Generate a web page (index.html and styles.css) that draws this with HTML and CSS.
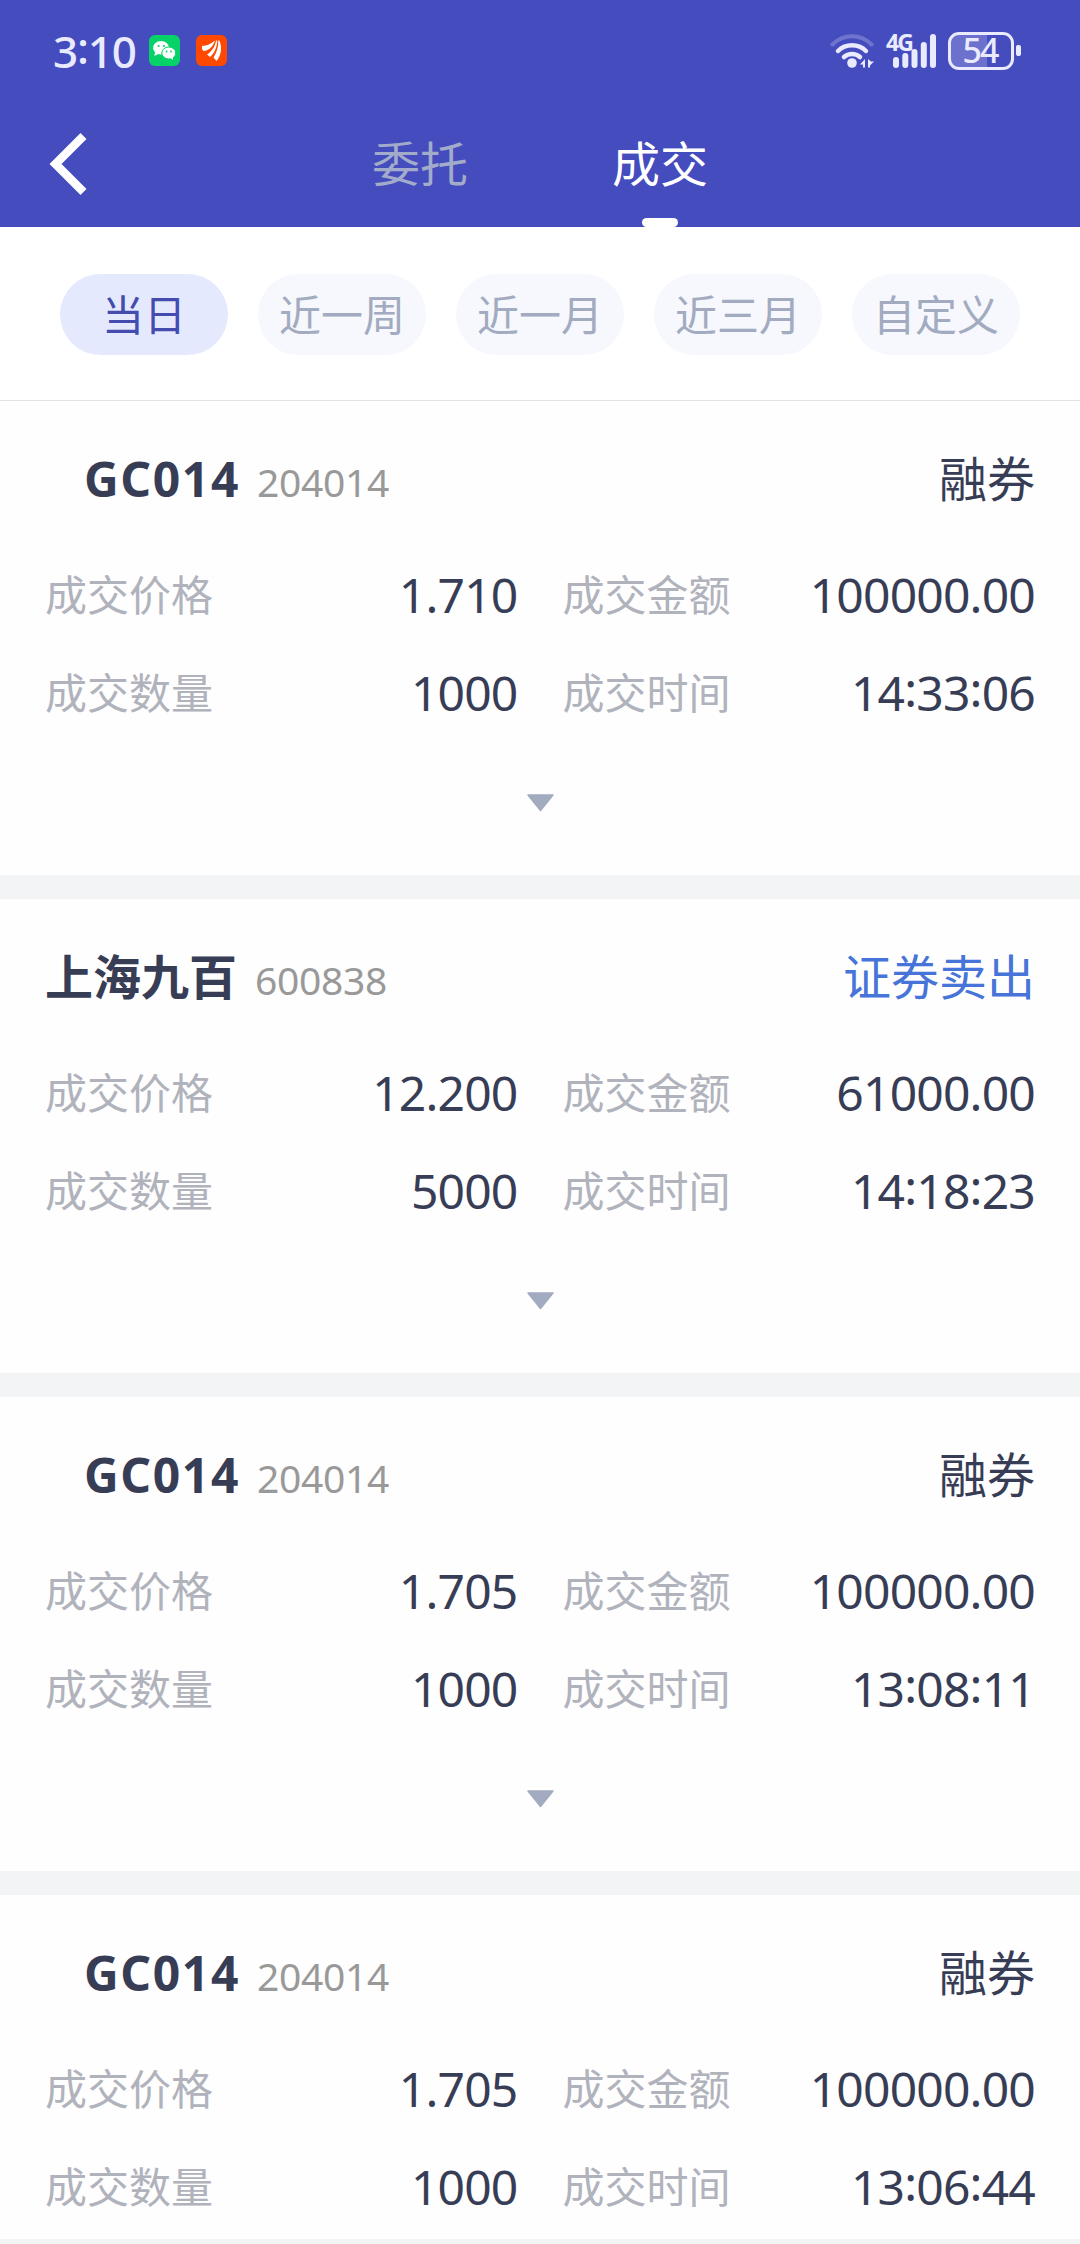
FILE: index.html
```html
<!DOCTYPE html>
<html lang="zh-CN">
<head>
    <meta charset="UTF-8">
    <meta name="viewport" content="width=device-width, initial-scale=1.0">
    <title>成交</title>
    <link rel="stylesheet" href="styles.css">
</head>
<body>
    <header class="header">
        <div class="status-bar">
            <span class="time">3<i>:</i>10</span>
            <svg class="app-icon" viewBox="0 0 31 31">
                <rect width="31" height="31" rx="6" fill="#07d268"/>
                <ellipse cx="12" cy="12.800" rx="8" ry="6.800" fill="#fff"/>
                <path d="M6 17l-.6 4 4-2z" fill="#fff"/>
                <ellipse cx="19.800" cy="18" rx="7" ry="6" fill="#fff" stroke="#07d268" stroke-width="1"/>
                <path d="M21 23l3 1.800v-3z" fill="#fff"/>
                <circle cx="9.600" cy="11" r="1.100" fill="#07d268"/>
                <circle cx="14.800" cy="11" r="1.100" fill="#07d268"/>
                <circle cx="17.600" cy="16.500" r="0.900" fill="#07d268"/>
                <circle cx="22" cy="16.500" r="0.900" fill="#07d268"/>
            </svg>
            <svg class="app-icon" viewBox="0 0 31 31">
                <rect width="31" height="31" rx="6" fill="#ff4800"/>
                <g fill="#fff">
                    <path d="M6 11c5-.5 9-2 13-5.500-2 6-5.500 10-11.500 10.500C6 15 5.800 13 6 11z"/>
                    <path d="M20 5.500c-.8 6-4 10.500-9 14l3 2.500c4.500-4 7.200-10 7.200-16.500z"/>
                    <path d="M22.200 5.500c.3 7-1.700 12-4.700 17l3 3.500c5-6 5.800-14 2.800-20.500z"/>
                </g>
            </svg>
            <div class="status-right">
                <svg class="wifi" viewBox="0 0 44 34" fill="none" stroke="#eaeaff" stroke-linecap="round">
                    <path d="M2.500 10.500a27 27 0 0 1 39 0" stroke-width="4" opacity="0.250"/>
                    <path d="M8 17a20 20 0 0 1 28 0" stroke-width="4.500"/>
                    <path d="M14 23a12 12 0 0 1 16 0" stroke-width="4.500"/>
                    <circle cx="22" cy="29" r="4.800" fill="#eaeaff" stroke="none"/>
                    <path d="M35 25v8.500h-2v-3h-3zM38 25v8.500h2v-2l4-4h-3z" fill="#eaeaff" stroke="none"/>
                </svg>
                <div class="signal">
                    <span class="net">4G</span>
                    <svg viewBox="0 0 50 34" fill="#eaeaff">
                        <rect x="7" y="23" width="6" height="11" rx="3"/>
                        <rect x="16.300" y="19" width="6" height="15" rx="3"/>
                        <rect x="25.500" y="15" width="6" height="19" rx="3"/>
                        <rect x="34.800" y="8" width="6" height="26" rx="3"/>
                        <rect x="44" y="0" width="6" height="34" rx="3"/>
                    </svg>
                </div>
                <div class="battery">54</div>
                <div class="battery-tip"></div>
            </div>
        </div>
        <nav class="nav">
            <svg class="back" viewBox="0 0 38 62">
                <path d="M34.500 3L6.500 31l28 28" fill="none" stroke="#fff" stroke-width="8.500"/>
            </svg>
            <div class="tabs">
                <div class="tab">委托</div>
                <div class="tab active">成交</div>
            </div>
        </nav>
    </header>

    <div class="filters">
        <div class="chip selected">当日</div>
        <div class="chip">近一周</div>
        <div class="chip">近一月</div>
        <div class="chip">近三月</div>
        <div class="chip">自定义</div>
    </div>

    <main class="list">
        <section class="card">
            <div class="card-head">
                <span class="name indent">GC014</span>
                <span class="code">204014</span>
                <span class="side">融券</span>
            </div>
            <div class="grid">
                <div class="cell"><span class="label">成交价格</span><span class="value">1.710</span></div>
                <div class="cell"><span class="label">成交金额</span><span class="value">100000.00</span></div>
                <div class="cell"><span class="label">成交数量</span><span class="value">1000</span></div>
                <div class="cell"><span class="label">成交时间</span><span class="value">14<i>:</i>33<i>:</i>06</span></div>
            </div>
            <div class="expand"><svg viewBox="0 0 27 18"><path d="M1 1h25L13.500 16.500z"/></svg></div>
        </section>

        <section class="card">
            <div class="card-head">
                <span class="name">上海九百</span>
                <span class="code">600838</span>
                <span class="side sell">证券卖出</span>
            </div>
            <div class="grid">
                <div class="cell"><span class="label">成交价格</span><span class="value">12.200</span></div>
                <div class="cell"><span class="label">成交金额</span><span class="value">61000.00</span></div>
                <div class="cell"><span class="label">成交数量</span><span class="value">5000</span></div>
                <div class="cell"><span class="label">成交时间</span><span class="value">14<i>:</i>18<i>:</i>23</span></div>
            </div>
            <div class="expand"><svg viewBox="0 0 27 18"><path d="M1 1h25L13.500 16.500z"/></svg></div>
        </section>

        <section class="card">
            <div class="card-head">
                <span class="name indent">GC014</span>
                <span class="code">204014</span>
                <span class="side">融券</span>
            </div>
            <div class="grid">
                <div class="cell"><span class="label">成交价格</span><span class="value">1.705</span></div>
                <div class="cell"><span class="label">成交金额</span><span class="value">100000.00</span></div>
                <div class="cell"><span class="label">成交数量</span><span class="value">1000</span></div>
                <div class="cell"><span class="label">成交时间</span><span class="value">13<i>:</i>08<i>:</i>11</span></div>
            </div>
            <div class="expand"><svg viewBox="0 0 27 18"><path d="M1 1h25L13.500 16.500z"/></svg></div>
        </section>

        <section class="card">
            <div class="card-head">
                <span class="name indent">GC014</span>
                <span class="code">204014</span>
                <span class="side">融券</span>
            </div>
            <div class="grid">
                <div class="cell"><span class="label">成交价格</span><span class="value">1.705</span></div>
                <div class="cell"><span class="label">成交金额</span><span class="value">100000.00</span></div>
                <div class="cell"><span class="label">成交数量</span><span class="value">1000</span></div>
                <div class="cell"><span class="label">成交时间</span><span class="value">13<i>:</i>06<i>:</i>44</span></div>
            </div>
        </section>
    </main>
</body>
</html>
```

FILE: styles.css
```css
* {
    box-sizing: border-box;
}
body {
    margin: 0;
    height: 2244px;
    display: flex;
    flex-direction: column;
    overflow: hidden;
    background: #f3f4f6;
    color: #383d56;
    font-family: "Noto Sans", "Noto Sans CJK SC", sans-serif;
}
svg {
    display: block;
}
/* raised colon in times */
i {
    font-style: normal;
    vertical-align: 4px;
    line-height: 1;
}

/* header */
.header {
    height: 227px;
    flex: none;
    background: #444cbe;
}
.status-bar {
    height: 101px;
    padding: 0 59px 0 53px;
    display: flex;
    align-items: center;
    color: #eaeaff;
}
.time {
    width: 96px;
    font-size: 44px;
    font-weight: 500;
    line-height: 60px;
    letter-spacing: -1.2px;
}
.app-icon {
    width: 31px;
    height: 31px;
    margin-right: 16px;
}
.status-right {
    margin-left: auto;
    display: flex;
    align-items: center;
}
.wifi {
    width: 44px;
    height: 34px;
    margin-right: 12px;
}
.signal {
    position: relative;
    width: 50px;
    height: 34px;
    margin-right: 12px;
}
.net {
    position: absolute;
    left: 0;
    top: -3px;
    font-size: 23px;
    font-weight: 700;
    line-height: 23px;
    letter-spacing: -2px;
}
.battery {
    width: 66px;
    height: 38px;
    padding-right: 2px;
    border: 3px solid #eaeaff;
    border-radius: 11px;
    background: linear-gradient(to right, #6b71cc 60%, transparent 60%);
    font-size: 34px;
    font-weight: 500;
    line-height: 31px;
    letter-spacing: -2px;
    text-align: center;
}
.battery-tip {
    width: 5px;
    height: 11px;
    margin-left: 2px;
    border-radius: 2px;
    background: #eaeaff;
}
.nav {
    height: 126px;
    display: flex;
    align-items: center;
    padding-left: 49px;
}
.back {
    width: 38px;
    height: 62px;
}
.tabs {
    display: flex;
    margin-left: 213px;
}
.tab {
    width: 240px;
    height: 126px;
    display: flex;
    flex-direction: column;
    align-items: center;
    font-size: 48px;
    line-height: 125px;
    color: #a2abc9;
}
.tab.active {
    color: #fff;
}
.tab.active::after {
    content: "";
    width: 36px;
    height: 9px;
    margin-top: -8px;
    border-radius: 5px;
    background: #fff;
}

/* date filters */
.filters {
    height: 174px;
    flex: none;
    display: flex;
    gap: 30px;
    padding: 47px 60px 0;
    background: #fff;
    border-bottom: 1px solid #e0e2e4;
}
.chip {
    width: 168px;
    height: 81px;
    border-radius: 41px;
    background: #f6f8fd;
    color: #a2abbf;
    font-size: 42px;
    line-height: 81px;
    text-align: center;
}
.chip.selected {
    background: #e5e9fe;
    color: #444cae;
}

/* trade list */
.list {
    height: 1838px;
    overflow: hidden;
}
.card {
    height: 474px;
    margin-bottom: 24px;
    padding: 0 45px;
    background: #fefefe;
}
.card-head {
    height: 145px;
    padding-top: 11px;
    display: flex;
    align-items: baseline;
    line-height: 134px;
    font-size: 48px;
}
.name {
    font-weight: 700;
}
.name.indent {
    margin-left: 39px;
    margin-right: -1px;
    letter-spacing: 1.6px;
}
.code {
    margin-left: 18px;
    font-size: 39px;
    color: #999;
    letter-spacing: -0.3px;
}
.side {
    margin-left: auto;
}
.side.sell {
    color: #4674d8;
}
.grid {
    display: grid;
    grid-template-columns: 1fr 1fr;
    column-gap: 45px;
}
.cell {
    height: 98px;
    display: flex;
    justify-content: space-between;
    line-height: 98px;
}
.label {
    font-size: 42px;
    line-height: 97px;
    color: #b0b2bc;
}
.value {
    font-size: 48px;
    letter-spacing: -0.8px;
}
.expand {
    height: 121px;
    display: flex;
    align-items: center;
    justify-content: center;
}
.expand svg {
    width: 27px;
    height: 18px;
    fill: #a2abbf;
    stroke: #a2abbf;
    stroke-width: 1.5;
    stroke-linejoin: round;
}
```
